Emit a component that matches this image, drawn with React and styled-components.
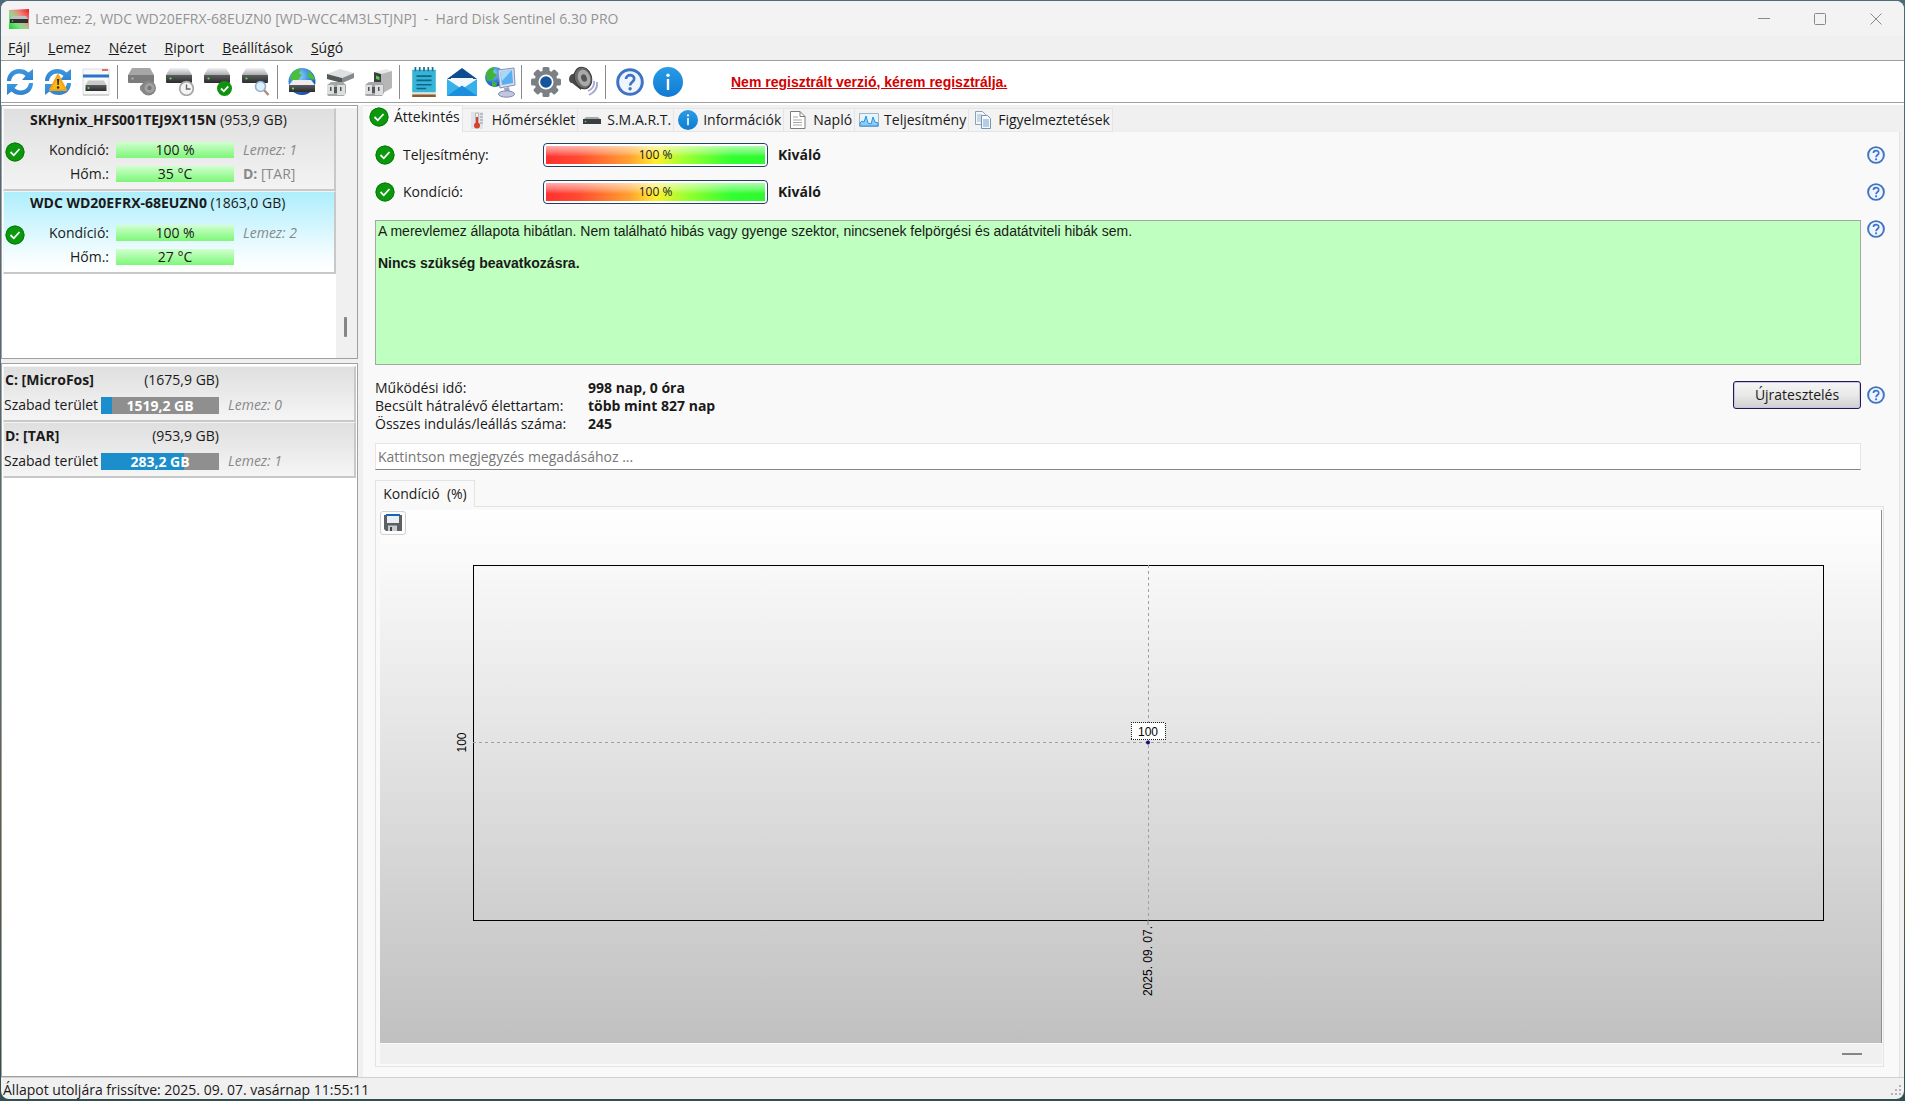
import React, { useState } from 'react';
import styled, { createGlobalStyle, css } from 'styled-components';

const GlobalStyle = createGlobalStyle`
  * {
    box-sizing: border-box;
  }
  body {
    margin: 0;
    background: #4a5f66;
    font-family: 'Open Sans', 'Noto Sans', sans-serif;
    font-size: 14px;
    line-height: 18px;
    color: #1a1a1a;
  }
  button, input {
    font: inherit;
    color: inherit;
  }
`;

const Desktop = styled.div`
  min-height: 100vh;
  padding: 1px 1px 2px;
  display: flex;
  background: linear-gradient(#4d6b78, #5a6c70 60%, #5d6244 75%, #2f4f54);
`;

const Window = styled.div`
  flex: 1;
  min-width: 0;
  display: flex;
  flex-direction: column;
  background: #f0f0f0;
  border-radius: 8px;
  overflow: hidden;
`;

const TitleBar = styled.header`
  display: flex;
  align-items: center;
  height: 35px;
  padding-left: 8px;
  background: #f3f3f3;
  color: #949494;
`;

const Title = styled.h1`
  flex: 1;
  margin: 0 0 0 6px;
  font-size: 14px;
  font-weight: 400;
  white-space: pre;
`;

const CaptionButton = styled.button`
  width: 56px;
  height: 34px;
  padding: 0;
  border: none;
  background: transparent;
  display: flex;
  align-items: center;
  justify-content: center;
`;

const MenuBar = styled.nav`
  display: flex;
  gap: 18px;
  height: 25px;
  align-items: center;
  padding-left: 7px;
  border-bottom: 1px solid #a0a0a0;
`;

const MenuItem = styled.button`
  padding: 0;
  border: none;
  background: transparent;

  &::first-letter {
    text-decoration: underline;
  }
`;

const Toolbar = styled.div`
  display: flex;
  align-items: center;
  height: 42px;
  background: #fff;
  border-bottom: 1px solid #a0a0a0;
`;

const ToolButton = styled.button`
  width: 38px;
  height: 38px;
  padding: 0;
  border: none;
  background: transparent;
  display: flex;
  align-items: center;
  justify-content: center;
`;

const Separator = styled.span`
  width: 1px;
  height: 34px;
  margin: 0 5px 0 2px;
  background: #8c8c8c;
`;

const RegisterLink = styled.a`
  margin-left: 44px;
  font-family: 'Liberation Sans', sans-serif;
  font-weight: 700;
  font-size: 14px;
  color: #d40000;
`;

const Body = styled.div`
  flex: 1;
  display: flex;
  gap: 5px;
  border-top: 2px solid #fff;
  min-height: 0;
`;

const Sidebar = styled.aside`
  width: 357px;
  flex: none;
  display: flex;
  flex-direction: column;
  gap: 4px;
`;

const ListPanel = styled.section`
  display: flex;
  background: #fff;
  border: 1px solid #a0a0a0;
  padding: 2px 1px 0 1px;
  ${(props) => (props.$fill ? 'flex: 1;' : 'height: 254px; padding-right: 0;')}
`;

const List = styled.ul`
  list-style: none;
  margin: 0;
  padding: 0;
  flex: 1;
`;

const ScrollTrack = styled.div`
  width: 21px;
  background: #f0f0f0;
  display: flex;
  justify-content: center;
  align-items: flex-end;
  padding: 0 3px 21px 0;
`;

const ScrollThumb = styled.span`
  width: 3px;
  height: 20px;
  border-radius: 1px;
  background: #868686;
`;

const raised = css`
  border: solid;
  border-width: 1px 2px 2px 1px;
  border-color: #f4f4f4 #c8c8c8 #c8c8c8 #f4f4f4;
`;

const DiskItem = styled.li`
  ${raised}
  height: 83px;
  display: grid;
  grid-template-columns: 20px 91px 118px 1fr;
  grid-template-rows: 29px 24px 23px;
  align-content: start;
  align-items: center;
  padding-left: 1px;
  background: ${(props) =>
    props.$selected ? 'linear-gradient(#aeeefc, #f4fdff 80%, #fff)' : 'linear-gradient(#dfdfdf, #f3f3f3)'};

  > svg {
    grid-row: 2 / 4;
    margin-top: -20px;
  }
`;

const DiskName = styled.div`
  grid-column: 1 / -1;
  align-self: start;
  padding: 2px 0 0 25px;
`;

const DiskLabel = styled.span`
  grid-column: 2;
  text-align: right;
  padding-right: 7px;
`;

const Gauge = styled.span`
  grid-column: 3;
  height: 16px;
  line-height: 16px;
  text-align: center;
  background: linear-gradient(#d2ffd0, #7df777);
`;

const Muted = styled.span`
  padding-left: 9px;
  color: #888;
  font-style: ${(props) => (props.$plain ? 'normal' : 'italic')};
`;

const VolumeItem = styled.li`
  ${raised}
  height: 56px;
  display: grid;
  grid-template-columns: 97px 118px 1fr;
  grid-template-rows: 25px 26px;
  align-content: start;
  align-items: center;
  background: linear-gradient(#dfdfdf, #f5f5f5);
`;

const VolumeName = styled.b`
  padding-left: 1px;
`;

const VolumeSize = styled.span`
  text-align: right;
  grid-column: 2 / 3;
`;

const VolumeLabel = styled.span`
  grid-column: 1;
  white-space: nowrap;
`;

const FreeSpace = styled.span`
  height: 17px;
  line-height: 17px;
  text-align: center;
  font-weight: 700;
  color: #fff;
  background: linear-gradient(90deg, #1c8ecb ${(props) => props.$used}%, #8f8f8f ${(props) => props.$used}%);
`;

const Main = styled.main`
  flex: 1;
  min-width: 0;
  display: flex;
  flex-direction: column;
`;

const TabBar = styled.div`
  display: flex;
  align-items: flex-end;
  height: 27px;
`;

const Tab = styled.button`
  display: flex;
  align-items: center;
  white-space: nowrap;
  border: 1px solid #e5e5e5;
  border-left: none;
  background: #f3f3f3;
  height: 24px;
  padding: 0 2px 0 4px;
  gap: 5px;

  ${(props) =>
    props.$active &&
    css`
      height: 27px;
      background: #f9f9f9;
      border-bottom: none;
      padding: 0 2px 4px 6px;
    `}
`;

const Page = styled.div`
  flex: 1;
  display: flex;
  flex-direction: column;
  background: #f9f9f9;
  border-right: 1px solid #e3e3e3;
  margin-right: 4px;
  padding: 4px 12px 10px 12px;
`;

const HelpRow = styled.div`
  display: grid;
  grid-template-columns: 1fr 20px;
  column-gap: 6px;
  align-items: ${(props) => (props.$top ? 'start' : 'center')};
`;

const HelpButton = styled.button`
  padding: 0;
  border: none;
  background: transparent;
  height: 20px;
  display: flex;
  align-items: center;
`;

const StatusHelp = styled.div`
  padding-top: 9px;
`;

const RetestHelp = styled.div`
  align-self: start;
  padding-top: 20px;
`;

const ScoreRow = styled.div`
  display: grid;
  grid-template-columns: 28px 140px 225px 1fr;
  align-items: center;
  height: 37px;
`;

const Score = styled.div`
  height: 24px;
  padding: 2px;
  border: 1px solid #24405f;
  border-radius: 4px;
  background: #fff;
`;

const ScoreFill = styled.div`
  height: 18px;
  line-height: 18px;
  font-size: 12px;
  text-align: center;
  background: linear-gradient(rgba(255, 255, 255, 0.6), rgba(255, 255, 255, 0.3) 35%, transparent 60%),
    linear-gradient(90deg, #ff3030, #ff4a30 15%, #ffa030 38%, #ffee30 50%, #a0ff30 63%, #30ff30 85%, #30f830);
`;

const Verdict = styled.b`
  padding-left: 10px;
`;

const StatusText = styled.div`
  height: 145px;
  margin-top: 10px;
  padding: 2px;
  border: 1px solid #a0a8a0;
  background: #bfffbf;
  font-family: 'Liberation Sans', sans-serif;
  line-height: 16px;

  p {
    margin: 0 0 16px;
  }
`;

const Facts = styled.dl`
  display: grid;
  grid-template-columns: 213px 1fr;
  margin: 14px 0 0;
  line-height: 18px;
`;

const Term = styled.dt`
  white-space: nowrap;
`;

const Value = styled.dd`
  margin: 0;
  font-weight: 700;
`;

const FactsRow = styled.div`
  display: flex;
  justify-content: space-between;
  align-items: flex-start;
`;

const RetestButton = styled.button`
  width: 128px;
  height: 28px;
  margin-top: 16px;
  padding: 0;
  border: 1px solid #1d1a5c;
  border-radius: 3px;
  box-shadow: inset 0 0 0 1px #c9c6dc;
  background: linear-gradient(#f6f6f6, #e9e9e9 50%, #cfcfcf);
`;

const Comment = styled.input`
  height: 27px;
  margin: 10px 26px 10px 0;
  padding: 0 2px;
  border: 1px solid #e6e6e6;
  border-bottom-color: #868686;
  background: #fff;

  &::placeholder {
    color: #777;
    opacity: 1;
  }
`;

const ChartTab = styled.button`
  align-self: flex-start;
  width: 100px;
  height: 27px;
  margin-bottom: -1px;
  position: relative;
  padding: 0;
  border: 1px solid #e3e3e3;
  border-bottom: none;
  background: #f9f9f9;
  white-space: pre;
`;

const ChartFrame = styled.div`
  flex: 1;
  display: flex;
  flex-direction: column;
  margin-right: 3px;
  padding: 3px 1px 2px 4px;
  border: 1px solid #e3e3e3;
`;

const Chart = styled.div`
  position: relative;
  flex: 1;
  display: flex;
  min-height: 320px;
  padding: 55px 58px 123px 93px;
  border-right: 1px solid #909090;
  background: linear-gradient(#fff, #c0c0c0);
`;

const Plot = styled.svg`
  flex: 1;
  min-width: 0;
  overflow: visible;
  font-family: 'Liberation Sans', sans-serif;
  font-size: 12px;
`;

const SaveButton = styled.button`
  position: absolute;
  left: 0;
  top: 1px;
  width: 26px;
  height: 24px;
  padding: 0;
  border: 1px solid #d0d0d0;
  border-radius: 3px;
  background: #fdfdfd;
  display: flex;
  align-items: center;
  justify-content: center;
`;

const ChartScroll = styled.div`
  height: 20px;
  margin-top: 1px;
  background: #f0f0f0;
  display: flex;
  align-items: center;
  justify-content: flex-end;
  padding-right: 20px;
`;

const ChartThumb = styled.span`
  width: 20px;
  height: 2px;
  background: #868686;
`;

const StatusBar = styled.footer`
  display: flex;
  justify-content: space-between;
  align-items: center;
  height: 22px;
  padding: 2px 2px 0 2px;
  border-top: 1px solid #d0d0d0;
`;

/* ---------- icons ---------- */

const Defs = styled.svg`
  position: absolute;
`;

const Svg = ({ size = 28, box = 28, children }) => (
  <svg width={size} height={size} viewBox={`0 0 ${box} ${box}`} fill="none" aria-hidden="true">
    {children}
  </svg>
);

const Gradients = () => (
  <Defs width="0" height="0" aria-hidden="true">
    <defs>
      <linearGradient id="metal" x1="0" y1="0" x2="0" y2="1">
        <stop offset="0" stopColor="#f2f2f4" />
        <stop offset="1" stopColor="#a9abad" />
      </linearGradient>
      <linearGradient id="blue" x1="0" y1="0" x2="0" y2="1">
        <stop offset="0" stopColor="#2a9ce6" />
        <stop offset="1" stopColor="#0f7ad2" />
      </linearGradient>
      <linearGradient id="sync" x1="0" y1="0" x2="0" y2="1">
        <stop offset="0" stopColor="#3d98e0" />
        <stop offset="1" stopColor="#2f83cf" />
      </linearGradient>
      <linearGradient id="dark" x1="0" y1="0" x2="0" y2="1">
        <stop offset="0" stopColor="#5a5c5e" />
        <stop offset="1" stopColor="#2a2c2e" />
      </linearGradient>
      <linearGradient id="redCorner" x1="1" y1="0" x2="0.3" y2="0.7">
        <stop offset="0" stopColor="#f01818" />
        <stop offset="1" stopColor="#f01818" stopOpacity="0" />
      </linearGradient>
      <linearGradient id="greenCorner" x1="0" y1="1" x2="0.7" y2="0.3">
        <stop offset="0" stopColor="#18d028" />
        <stop offset="1" stopColor="#18d028" stopOpacity="0" />
      </linearGradient>
      <radialGradient id="globe" cx="0.4" cy="0.3" r="0.8">
        <stop offset="0" stopColor="#8fd4ff" />
        <stop offset="0.6" stopColor="#2b78d4" />
        <stop offset="1" stopColor="#123a8c" />
      </radialGradient>
    </defs>
  </Defs>
);

const SyncArrows = () => (
  <g fill="url(#sync)">
    <path d="M1 13C1 6 6 1 13 1c4 0 7 1 9.500 3.500L27 1v11H16l3.500-4C18 6.500 16 5.500 13.500 5.500 8.500 5.500 5.500 9 5 13z" />
    <path d="M27 15c0 7-5 12-12 12-4 0-7-1-9.500-3.500L1 27V16h11l-3.500 4c1.500 1.500 3.500 2.500 6 2.500 5 0 8-3.500 8.500-7.500z" />
  </g>
);

const SyncIcon = () => (
  <Svg>
    <SyncArrows />
  </Svg>
);

const SyncWarnIcon = () => (
  <Svg>
    <SyncArrows />
    <path d="M14 7 22 22H6z" fill="#fdb913" stroke="#f0a51a" strokeWidth="2" strokeLinejoin="round" />
    <path d="M13 11h2.200l-.5 6h-1.200z" fill="#3a2a00" />
    <circle cx="14.100" cy="19.500" r="1.200" fill="#3a2a00" />
  </Svg>
);

const Drive = ({ gray }) => (
  <g>
    <path d="M4 0h18l4 7H0z" fill={gray ? '#a6a6a6' : 'url(#metal)'} />
    <path d="M0 7h26v7q0 1-1 1H1q-1 0-1-1z" fill={gray ? '#7b7b7b' : 'url(#dark)'} />
    <circle cx="4.500" cy="10.500" r="1.100" fill={gray ? '#bbb' : '#5fe860'} />
  </g>
);

const ReportIcon = () => (
  <Svg>
    <path d="M1 1h26v26H1z" fill="#f8f8f8" stroke="#dcdcdc" />
    <path d="M1 6.500h26v3H1z" fill="#2874c9" />
    <path d="M20 2h6" stroke="#d0493c" strokeWidth="1.500" />
    <path d="M1 27h26" stroke="#bdbdbd" />
    <path d="M6 12.500h16l2.500 4.500h-21z" fill="#c9cacc" />
    <path d="M3.500 17h21v6h-21z" fill="url(#dark)" />
    <circle cx="6.500" cy="20" r="1" fill="#5fe860" />
  </Svg>
);

const DriveSoundIcon = () => (
  <Svg>
    <Drive gray />
    <path d="m12 18 6-4v13l-6-5z" fill="#8d8d8d" />
    <circle cx="20.500" cy="20" r="7.500" fill="#858585" />
    <circle cx="21.500" cy="20" r="5" fill="#a2a2a2" />
    <circle cx="21.500" cy="20" r="2.200" fill="#777" />
  </Svg>
);

const DriveClockIcon = () => (
  <Svg>
    <Drive />
    <circle cx="20.500" cy="20.500" r="6.800" fill="#f3f3f3" stroke="#a8a8a8" strokeWidth="1.800" />
    <path d="M20.500 16.500v4.500h4" stroke="#666" strokeWidth="1.400" />
  </Svg>
);

const DriveCheckIcon = () => (
  <Svg>
    <Drive />
    <circle cx="20.500" cy="20.500" r="7.500" fill="#11920f" />
    <path d="m17 20.500 2.800 2.800 4.500-5" stroke="#fff" strokeWidth="1.800" />
  </Svg>
);

const DriveSearchIcon = () => (
  <Svg>
    <Drive />
    <path d="m22 22 4.500 5" stroke="#b08d78" strokeWidth="2.500" />
    <circle cx="18.500" cy="18.500" r="5" fill="#dcefff" stroke="#8fb1d3" strokeWidth="1.600" />
  </Svg>
);

const GlobeDriveIcon = () => (
  <Svg>
    <circle cx="14" cy="13.500" r="13.500" fill="url(#globe)" />
    <path d="M4 5c3-3 6-5 9-4l-2 4 3 2-4 5-5 1-3-3zM19 2c4 2 7 6 8 10l-4-1-4-3 2-3z" fill="#4bbf3c" />
    <path d="M5 12h18l4 5H1z" fill="#ededee" />
    <path d="M1 17h26v7H1z" fill="url(#dark)" />
    <circle cx="5" cy="20.500" r="1.100" fill="#5fe860" />
  </Svg>
);

const Plug = () => (
  <g>
    <path d="m1 17 4-3h12l3 3v8l-2 3H2l-1-2z" fill="#a5a7a8" />
    <path d="M1 17h7v9H1zM11 17h8v10h-8z" fill="#dddede" />
    <path d="M4 19h1.500v4H4zM14 19h1.500v4H14z" fill="#4e5052" />
    <path d="M8 19h3v6H8z" fill="#54585a" />
  </g>
);

const DriveToolIcon = () => (
  <Svg>
    <path d="M1 6 14 1l14 4-12 5z" fill="#dedfe0" />
    <path d="m1 6 15 4v5L1 11z" fill="#55585a" />
    <path d="m16 10 12-5v5l-12 5z" fill="#86898b" />
    <Plug />
  </Svg>
);

const CaseToolIcon = () => (
  <Svg>
    <path d="M10 4 22 1l6 2-11 3z" fill="#e7e7e8" />
    <path d="M10 4l7 2v16l-7-3z" fill="#3b3f41" />
    <path d="M12 7.500 15.500 9v3L12 11z" fill="#58c955" />
    <path d="m17 6 11-3v17l-11 6z" fill="#b4b6b8" />
    <Plug />
  </Svg>
);

const NotepadIcon = () => (
  <Svg size={30} box={28}>
    <path d="M3 25.500h22V28H3z" fill="#8d5a2b" />
    <path d="M3 23.500h22v2H3z" fill="#e8e3da" />
    <path d="M3 2.500h22v21H3z" fill="#36b4d8" />
    <path d="M6 0v4M10 0v4M14 0v4M18 0v4M22 0v4" stroke="#1d6f8c" strokeWidth="1.600" />
    <path d="M7 8.500h14M7 12.500h14M7 16.500h14M7 20h9" stroke="#0f6488" strokeWidth="1.500" />
  </Svg>
);

const MailIcon = () => (
  <Svg size={32} box={32}>
    <path d="M1 13 16 2l15 11z" fill="#0f4d91" />
    <path d="M5 12h22v12H5z" fill="#f3f8fb" />
    <path d="M1 13l15 10 15-10v17H1z" fill="#36b1ea" />
    <path d="M1 30 16 19.500 31 30z" fill="#1b8fdc" />
  </Svg>
);

const NetworkIcon = () => (
  <Svg size={32} box={32}>
    <circle cx="11" cy="11" r="10" fill="url(#globe)" />
    <path d="M2 7c2-4 5-6 9-6l-2 5 4 3-5 5-5 1zM8 15l5 2-1 4-4-1z" fill="#3fb43a" />
    <path d="m14 4 16-2 1 17-15 3z" fill="#d5dced" stroke="#8791b5" />
    <path d="m16 6 12-2 1 13-11 2z" fill="#5aaef0" />
    <path d="m16 6 12-2-10 11z" fill="#a5d8fb" />
    <path d="m20 22 5-1 1 5h-5z" fill="#9ea3c4" />
    <ellipse cx="22.500" cy="28" rx="8" ry="3.200" fill="#c3c6e0" stroke="#8488b0" />
  </Svg>
);

const GearIcon = () => (
  <Svg size={32} box={32}>
    <g fill="#7b8085">
      {[0, 45, 90, 135].map((a) => (
        <rect key={a} x="12.500" y="1" width="7" height="30" rx="1.500" transform={`rotate(${a} 16 16)`} />
      ))}
      <circle cx="16" cy="16" r="11.500" />
    </g>
    <circle cx="16" cy="16" r="7.500" fill="#fff" />
    <circle cx="16" cy="16" r="5.800" fill="#15559d" />
  </Svg>
);

const SpeakerIcon = () => (
  <Svg size={32} box={32}>
    <path d="M1 13c0-3 2-5 4-5l8-6v22l-9-7c-2 0-3-2-3-4z" fill="#4b4b4b" />
    <ellipse cx="15" cy="12" rx="8.500" ry="11" transform="rotate(-18 15 12)" fill="#6c6c6c" stroke="#3a3a3a" />
    <ellipse cx="16" cy="12" rx="6" ry="8.500" transform="rotate(-18 16 12)" fill="#a9a9a9" />
    <ellipse cx="16" cy="12" rx="2.800" ry="3.800" transform="rotate(-18 16 12)" fill="#555" />
    <path d="M26 15q1 7-6 10M29 16q1 9-8 13" stroke="#a7a9cf" strokeWidth="1.900" />
  </Svg>
);

const HelpIcon = ({ size = 28 }) => (
  <Svg size={size}>
    <circle cx="14" cy="14" r="12.300" fill="#eef5ff" stroke="#3f74c4" strokeWidth="3" />
    <path d="M10 11c0-5 8.200-5 8.200-.3 0 3.300-4.100 3.300-4.100 6.800" stroke="#3f74c4" strokeWidth="2.700" />
    <circle cx="14.100" cy="20.800" r="1.700" fill="#3f74c4" />
  </Svg>
);

const InfoIcon = ({ size = 30 }) => (
  <Svg size={size} box={30}>
    <circle cx="15" cy="15" r="15" fill="url(#blue)" />
    <circle cx="15" cy="8.200" r="1.700" fill="#fff" />
    <path d="M15 12v11" stroke="#fff" strokeWidth="2.400" />
  </Svg>
);

const CheckIcon = () => (
  <Svg size={20} box={20}>
    <circle cx="10" cy="10" r="9.500" fill="#0c980c" />
    <circle cx="10" cy="10" r="9" stroke="#0a7a0a" />
    <path d="m5.500 10 3.300 3.300L14.500 7" stroke="#fff" strokeWidth="1.800" />
  </Svg>
);

const AppIcon = () => (
  <Svg size={20} box={20}>
    <path d="M0 1 20 0v20H0z" fill="#f4f4f4" />
    <path d="M0 1 20 0v20H0z" fill="url(#redCorner)" />
    <path d="M0 1 20 0v20H0z" fill="url(#greenCorner)" />
    <path d="M3 7h14l2 3H1z" fill="#bfc1c3" />
    <path d="M1 10h18v4H1z" fill="#2d2f31" />
    <circle cx="3.500" cy="12" r=".8" fill="#5fe860" />
  </Svg>
);

const ThermoIcon = () => (
  <Svg size={20} box={20}>
    <path d="M4 2h12v17H4z" fill="#dfe4ea" />
    <path d="M13 4h3M13 7h3M13 10h3M13 13h3" stroke="#8f99a5" />
    <path d="M8.500 3h3v10h-3z" fill="#f2f2f2" stroke="#b7b7b7" />
    <path d="M9 7h2v7H9z" fill="#d8402c" />
    <circle cx="10" cy="15.500" r="3" fill="#d8402c" />
  </Svg>
);

const SmartIcon = () => (
  <Svg size={20} box={20}>
    <path d="M4 7h12l2 2H2z" fill="#a6a8aa" />
    <path d="M1 9h18v5H1z" fill="#3b3e40" />
    <circle cx="3.500" cy="11.500" r=".8" fill="#5fe860" />
  </Svg>
);

const LogIcon = () => (
  <Svg size={20} box={20}>
    <path d="M2.500 1.500H12l5 5v12H2.500z" fill="#fff" stroke="#7d7d7d" />
    <path d="M12 1.500v5h5" stroke="#7d7d7d" />
    <path d="M5 7h5M5 10h9M5 12.500h9M5 15h9" stroke="#a8a8a8" />
  </Svg>
);

const PerfIcon = () => (
  <Svg size={20} box={20}>
    <path d="M.5 3.500h19v13H.5z" fill="#e6f4fd" stroke="#9fb4c4" />
    <path d="M1 13l2-2 2 1 2-6 2 7 3 1 2-7 2 5 3 1v3H1z" fill="#8fcbf2" stroke="#2b93dc" />
  </Svg>
);

const AlertsIcon = () => (
  <Svg size={20} box={20}>
    <path d="M2.500 1.500h7l3 3v10h-10z" fill="#f2f7fc" stroke="#8ba0b5" />
    <path d="M4 5h5M4 7h5M4 9h5M4 11h5" stroke="#9db8d3" />
    <path d="M8.500 5.500h6l3 3v10h-9z" fill="#f6fafe" stroke="#7d93a9" />
    <path d="M10 10h6M10 12h6M10 14h6M10 16h6" stroke="#6fa0cf" />
  </Svg>
);

const DisketteIcon = () => (
  <Svg size={18} box={18}>
    <path d="M0 1h18v16H2l-2-2z" fill="#5c6063" />
    <path d="M3 1h12v8H3z" fill="#eceff1" />
    <path d="M2 0h14v2H2z" fill="#1565b8" />
    <path d="M4 11.500h9V17H4z" fill="#c9ccce" />
    <path d="M6 13h2v4H6z" fill="#44474a" />
  </Svg>
);

const MinimizeIcon = () => (
  <Svg size={12} box={12}>
    <path d="M0 5.500h12" stroke="#8a8a8a" />
  </Svg>
);

const MaximizeIcon = () => (
  <Svg size={12} box={12}>
    <rect x=".5" y=".5" width="11" height="11" rx="1" stroke="#8a8a8a" />
  </Svg>
);

const CloseIcon = () => (
  <Svg size={12} box={12}>
    <path d="m.5.5 11 11M11.500.5l-11 11" stroke="#8a8a8a" />
  </Svg>
);

const GripIcon = () => (
  <Svg size={12} box={12}>
    <path d="M9 1h2v2H9zM9 5h2v2H9zM5 5h2v2H5zM9 9h2v2H9zM5 9h2v2H5zM1 9h2v2H1z" fill="#b4b4b4" />
  </Svg>
);

/* ---------- data ---------- */

const menus = ['Fájl', 'Lemez', 'Nézet', 'Riport', 'Beállítások', 'Súgó'];

const toolGroups = [
  [['Frissítés', SyncIcon], ['Frissítés most', SyncWarnIcon], ['Jelentés', ReportIcon]],
  [
    ['Zajszint', DriveSoundIcon],
    ['Rövid teszt', DriveClockIcon],
    ['Bővített teszt', DriveCheckIcon],
    ['Felületteszt', DriveSearchIcon],
  ],
  [['Hálózat', GlobeDriveIcon], ['Csatlakozó', DriveToolIcon], ['Számítógép', CaseToolIcon]],
  [['Napló', NotepadIcon], ['Üzenet', MailIcon], ['Távoli gép', NetworkIcon]],
  [['Beállítások', GearIcon], ['Hang', SpeakerIcon]],
  [['Súgó', HelpIcon], ['Névjegy', InfoIcon]],
];

const disks = [
  { id: 1, name: 'SKHynix_HFS001TEJ9X115N', size: '953,9 GB', health: '100 %', temp: '35 °C', volume: ['D:', '[TAR]'] },
  { id: 2, name: 'WDC WD20EFRX-68EUZN0', size: '1863,0 GB', health: '100 %', temp: '27 °C' },
];

const volumes = [
  { name: 'C: [MicroFos]', size: '1675,9 GB', free: '1519,2 GB', used: 9, disk: 0 },
  { name: 'D: [TAR]', size: '953,9 GB', free: '283,2 GB', used: 70, disk: 1 },
];

const tabs = [
  ['Áttekintés', CheckIcon],
  ['Hőmérséklet', ThermoIcon],
  ['S.M.A.R.T.', SmartIcon],
  ['Információk', () => <InfoIcon size={20} />],
  ['Napló', LogIcon],
  ['Teljesítmény', PerfIcon],
  ['Figyelmeztetések', AlertsIcon],
];

const facts = [
  ['Működési idő:', '998 nap, 0 óra'],
  ['Becsült hátralévő élettartam:', 'több mint 827 nap'],
  ['Összes indulás/leállás száma:', '245'],
];

const Help = () => (
  <HelpButton aria-label="Súgó">
    <HelpIcon size={18} />
  </HelpButton>
);

const HealthPlot = () => (
  <Plot role="img" aria-label="Kondíció (%)">
    <rect width="100%" height="100%" stroke="#000" fill="none" shapeRendering="crispEdges" />
    <g stroke="#a0a0a0" strokeDasharray="3 3" shapeRendering="crispEdges">
      <line x1="0" y1="50%" x2="100%" y2="50%" />
      <line x1="50%" y1="0" x2="50%" y2="100%" />
    </g>
    <svg x="0" y="50%" overflow="visible">
      <text transform="translate(-7 0) rotate(-90)" textAnchor="middle">100</text>
    </svg>
    <svg x="50%" y="50%" overflow="visible">
      <rect x="-17" y="-20" width="34" height="17" fill="#fff" stroke="#222" strokeDasharray="1 1" shapeRendering="crispEdges" />
      <text y="-7" textAnchor="middle">100</text>
      <circle r="2" fill="#10107a" />
    </svg>
    <svg x="50%" y="100%" overflow="visible">
      <path d="M0 0v5" stroke="#888" />
      <text transform="translate(4 6) rotate(-90)" textAnchor="end">2025. 09. 07.</text>
    </svg>
  </Plot>
);

const App = () => {
  const [selected, setSelected] = useState(2);
  const [tab, setTab] = useState('Áttekintés');
  const [comment, setComment] = useState('');

  return (
    <Desktop>
      <GlobalStyle />
      <Gradients />
      <Window>
        <TitleBar>
          <AppIcon />
          <Title>{'Lemez: 2, WDC WD20EFRX-68EUZN0 [WD-WCC4M3LSTJNP]  -  Hard Disk Sentinel 6.30 PRO'}</Title>
          <CaptionButton aria-label="Kis méret"><MinimizeIcon /></CaptionButton>
          <CaptionButton aria-label="Teljes méret"><MaximizeIcon /></CaptionButton>
          <CaptionButton aria-label="Bezárás"><CloseIcon /></CaptionButton>
        </TitleBar>
        <MenuBar>
          {menus.map((name) => (
            <MenuItem key={name}>{name}</MenuItem>
          ))}
        </MenuBar>
        <Toolbar>
          {toolGroups.map((group, i) => (
            <React.Fragment key={i}>
              {i > 0 && <Separator />}
              {group.map(([label, Icon]) => (
                <ToolButton key={label} aria-label={label}>
                  <Icon />
                </ToolButton>
              ))}
            </React.Fragment>
          ))}
          <RegisterLink href="#register">Nem regisztrált verzió, kérem regisztrálja.</RegisterLink>
        </Toolbar>

        <Body>
          <Sidebar>
            <ListPanel>
              <List>
                {disks.map((disk) => (
                  <DiskItem key={disk.id} $selected={disk.id === selected} onClick={() => setSelected(disk.id)}>
                    <DiskName>
                      <b>{disk.name}</b> ({disk.size})
                    </DiskName>
                    <CheckIcon />
                    <DiskLabel>Kondíció:</DiskLabel>
                    <Gauge>{disk.health}</Gauge>
                    <Muted>Lemez: {disk.id}</Muted>
                    <DiskLabel>Hőm.:</DiskLabel>
                    <Gauge>{disk.temp}</Gauge>
                    {disk.volume && (
                      <Muted $plain>
                        <b>{disk.volume[0]}</b> {disk.volume[1]}
                      </Muted>
                    )}
                  </DiskItem>
                ))}
              </List>
              <ScrollTrack>
                <ScrollThumb />
              </ScrollTrack>
            </ListPanel>
            <ListPanel $fill>
              <List>
                {volumes.map((volume) => (
                  <VolumeItem key={volume.name}>
                    <VolumeName>{volume.name}</VolumeName>
                    <VolumeSize>({volume.size})</VolumeSize>
                    <VolumeLabel>Szabad terület</VolumeLabel>
                    <FreeSpace $used={volume.used}>{volume.free}</FreeSpace>
                    <Muted>Lemez: {volume.disk}</Muted>
                  </VolumeItem>
                ))}
              </List>
            </ListPanel>
          </Sidebar>

          <Main>
            <TabBar role="tablist">
              {tabs.map(([name, Icon]) => (
                <Tab key={name} role="tab" aria-selected={name === tab} $active={name === tab} onClick={() => setTab(name)}>
                  <Icon />
                  {name}
                </Tab>
              ))}
            </TabBar>
            <Page>
              {['Teljesítmény:', 'Kondíció:'].map((name) => (
                <HelpRow key={name}>
                  <ScoreRow>
                    <CheckIcon />
                    <span>{name}</span>
                    <Score>
                      <ScoreFill>100 %</ScoreFill>
                    </Score>
                    <Verdict>Kiváló</Verdict>
                  </ScoreRow>
                  <Help />
                </HelpRow>
              ))}
              <HelpRow $top>
                <StatusText>
                  <p>A merevlemez állapota hibátlan. Nem található hibás vagy gyenge szektor, nincsenek felpörgési és adatátviteli hibák sem.</p>
                  <b>Nincs szükség beavatkozásra.</b>
                </StatusText>
                <StatusHelp>
                  <Help />
                </StatusHelp>
              </HelpRow>
              <HelpRow>
                <FactsRow>
                  <Facts>
                    {facts.map(([name, value]) => (
                      <React.Fragment key={name}>
                        <Term>{name}</Term>
                        <Value>{value}</Value>
                      </React.Fragment>
                    ))}
                  </Facts>
                  <RetestButton>Újratesztelés</RetestButton>
                </FactsRow>
                <RetestHelp>
                  <Help />
                </RetestHelp>
              </HelpRow>
              <Comment
                aria-label="Megjegyzés"
                placeholder="Kattintson megjegyzés megadásához ..."
                value={comment}
                onChange={(e) => setComment(e.target.value)}
              />
              <ChartTab>{'Kondíció  (%)'}</ChartTab>
              <ChartFrame>
                <Chart>
                  <SaveButton aria-label="Mentés">
                    <DisketteIcon />
                  </SaveButton>
                  <HealthPlot />
                </Chart>
                <ChartScroll>
                  <ChartThumb />
                </ChartScroll>
              </ChartFrame>
            </Page>
          </Main>
        </Body>
        <StatusBar>
          <span>Állapot utoljára frissítve: 2025. 09. 07. vasárnap 11:55:11</span>
          <GripIcon />
        </StatusBar>
      </Window>
    </Desktop>
  );
};

export default App;
